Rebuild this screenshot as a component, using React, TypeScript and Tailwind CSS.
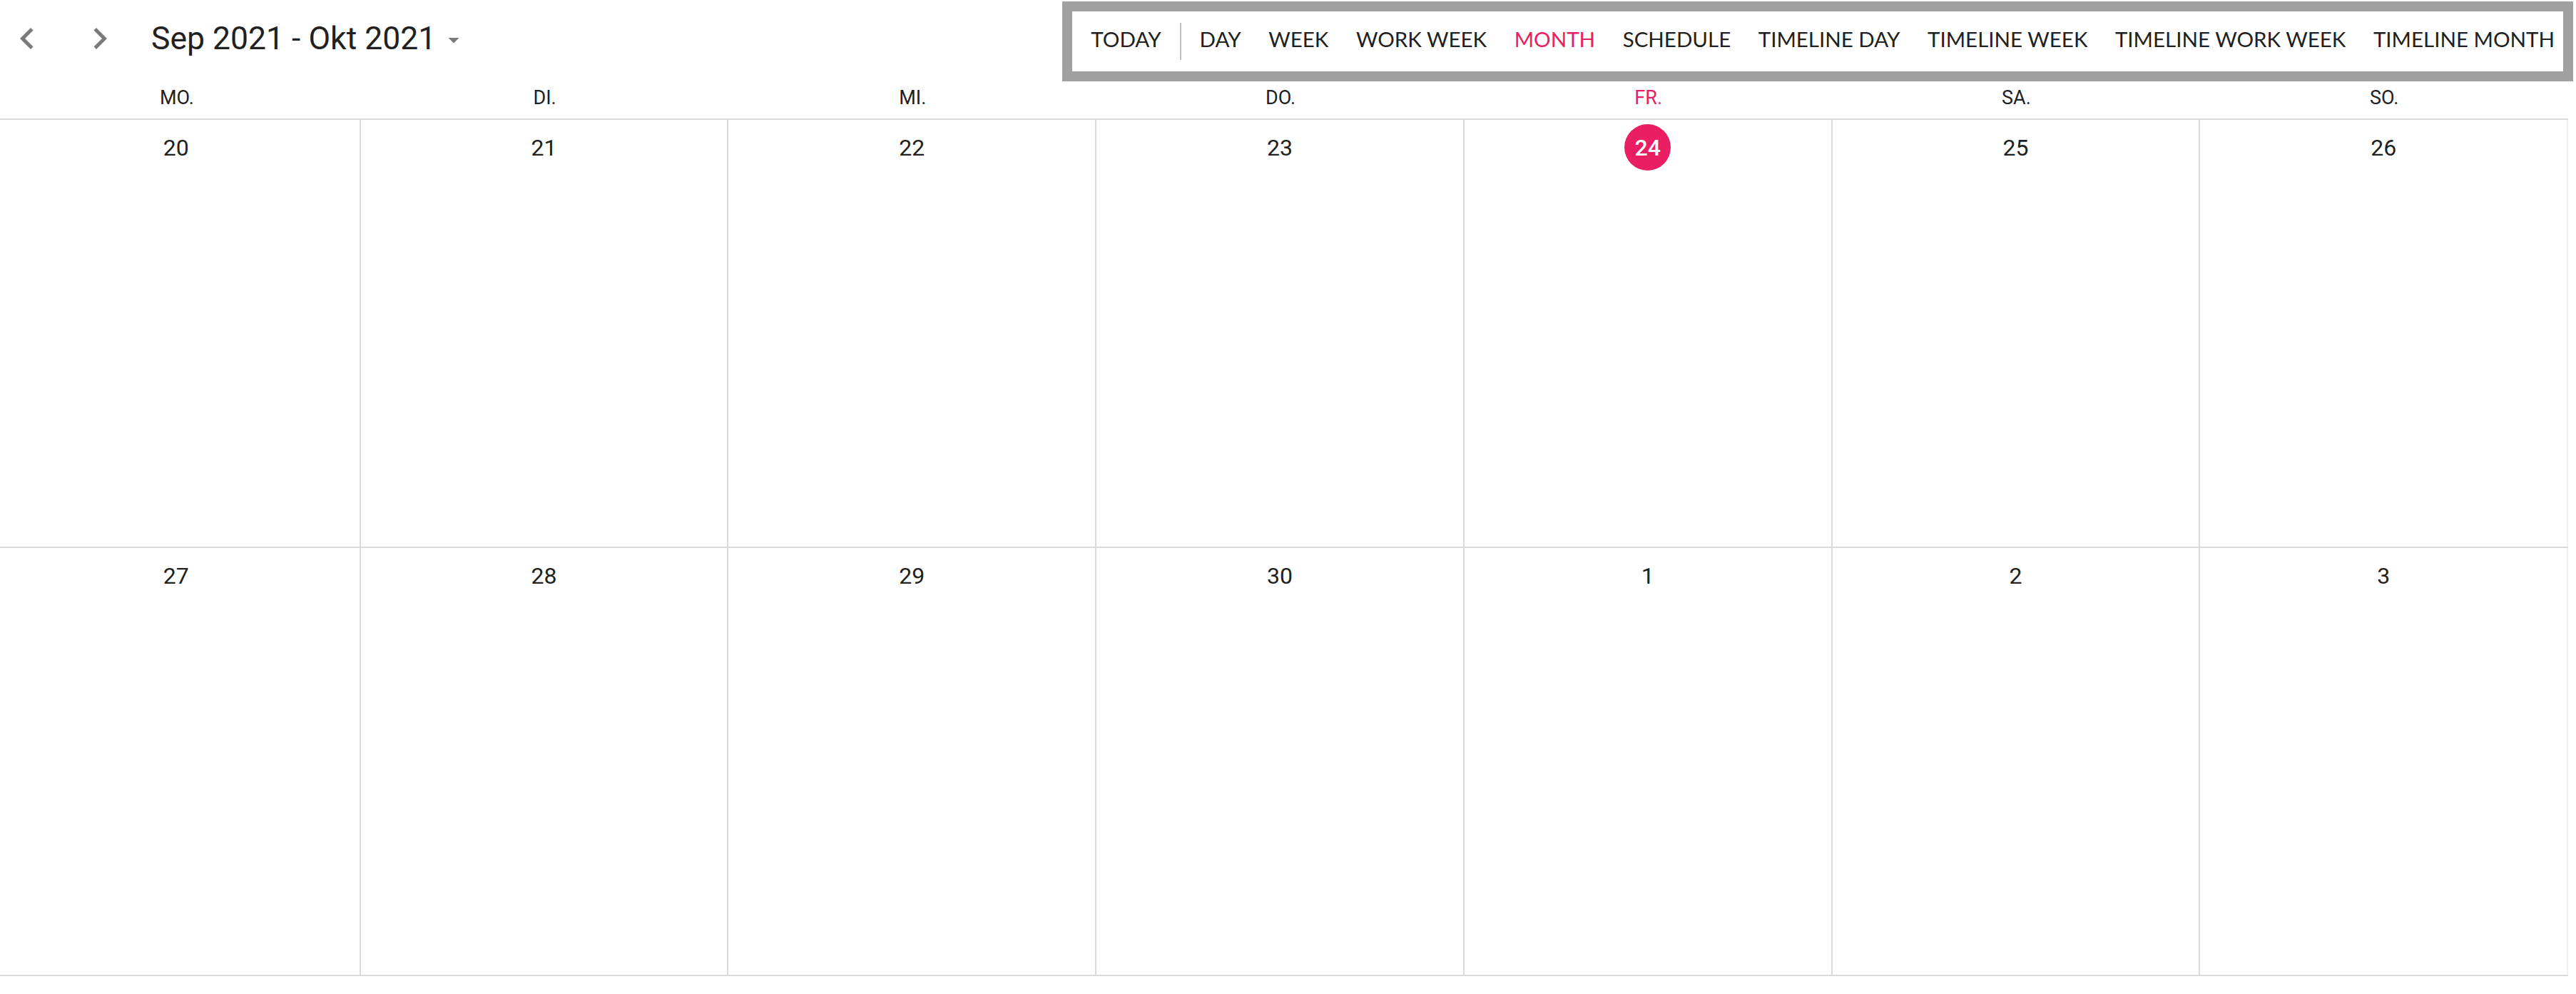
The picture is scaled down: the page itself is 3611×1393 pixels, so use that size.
import React from 'react';

const views = ['DAY', 'WEEK', 'WORK WEEK', 'MONTH', 'SCHEDULE', 'TIMELINE DAY', 'TIMELINE WEEK', 'TIMELINE WORK WEEK', 'TIMELINE MONTH'];
const dayNames = ['MO.', 'DI.', 'MI.', 'DO.', 'FR.', 'SA.', 'SO.'];
const weeks = [
  [20, 21, 22, 23, 24, 25, 26],
  [27, 28, 29, 30, 1, 2, 3],
];

const ChevronLeft = () => (
  <svg width="60" height="60" viewBox="0 0 24 24" fill="#7a7a7a">
    <path d="M15.41 7.41L14 6l-6 6 6 6 1.41-1.41L10.83 12z" />
  </svg>
);

const ChevronRight = () => (
  <svg width="60" height="60" viewBox="0 0 24 24" fill="#7a7a7a">
    <path d="M10 6L8.59 7.41 13.17 12l-4.58 4.59L10 18l6-6z" />
  </svg>
);

export default function App() {
  return (
    <div className="w-[3611px] h-[1393px] bg-white overflow-hidden font-['Roboto',sans-serif] text-[#212121]">
      {/* toolbar */}
      <div className="flex items-start h-[114px]">
        <div className="flex items-center h-[108px] pl-[8px]">
          <ChevronLeft />
          <div className="ml-[42px]">
            <ChevronRight />
          </div>
          <span className="ml-[42px] text-[44.5px] leading-none">Sep 2021 - Okt 2021</span>
          <svg className="ml-[7px] mt-[4px]" width="36" height="36" viewBox="0 0 24 24" fill="#7a7a7a">
            <path d="M7 10l5 5 5-5z" />
          </svg>
        </div>
        <div className="ml-auto mr-[4px] mt-[2px] border-[14px] border-[#a0a0a0] h-[112px] flex items-center pl-[26px] pr-[12px] pb-[6px] font-['Lato',sans-serif] text-[29.5px] leading-none">
          <span>TODAY</span>
          <span className="mx-[26px] mt-[6px] w-[2px] h-[52px] bg-[#bdbdbd]" />
          <div className="flex items-center gap-[38.5px]">
            {views.map((v) => (
              <span key={v} className={v === 'MONTH' ? 'text-[#e91e63]' : ''}>
                {v}
              </span>
            ))}
          </div>
        </div>
      </div>

      {/* day names */}
      <div className="-ml-[10px] w-[3610px] grid grid-cols-7 h-[54px] border-b-2 border-[#dadada]">
        {dayNames.map((d, i) => (
          <div
            key={d}
            className={`flex items-center justify-center pb-[6px] text-[27px] ${i === 4 ? 'text-[#e91e63]' : ''}`}
          >
            {d}
          </div>
        ))}
      </div>

      {/* month grid */}
      {weeks.map((week, r) => (
        <div key={r} className="-ml-[10px] w-[3610px] grid grid-cols-7 h-[600px] border-b-2 border-[#dadada]">
          {week.map((day, i) => {
            const today = r === 0 && day === 24;
            return (
              <div
                key={i}
                className={`flex justify-center pt-[6px] border-r-2 ${i === 6 ? 'border-[#f0f0f0]' : 'border-[#dadada]'}`}
              >
                <div
                  className={`w-[65px] h-[65px] rounded-full flex items-center justify-center text-[32px] ${today ? 'bg-[#e91e63] text-white font-medium' : ''}`}
                >
                  {day}
                </div>
              </div>
            );
          })}
        </div>
      ))}
    </div>
  );
}
